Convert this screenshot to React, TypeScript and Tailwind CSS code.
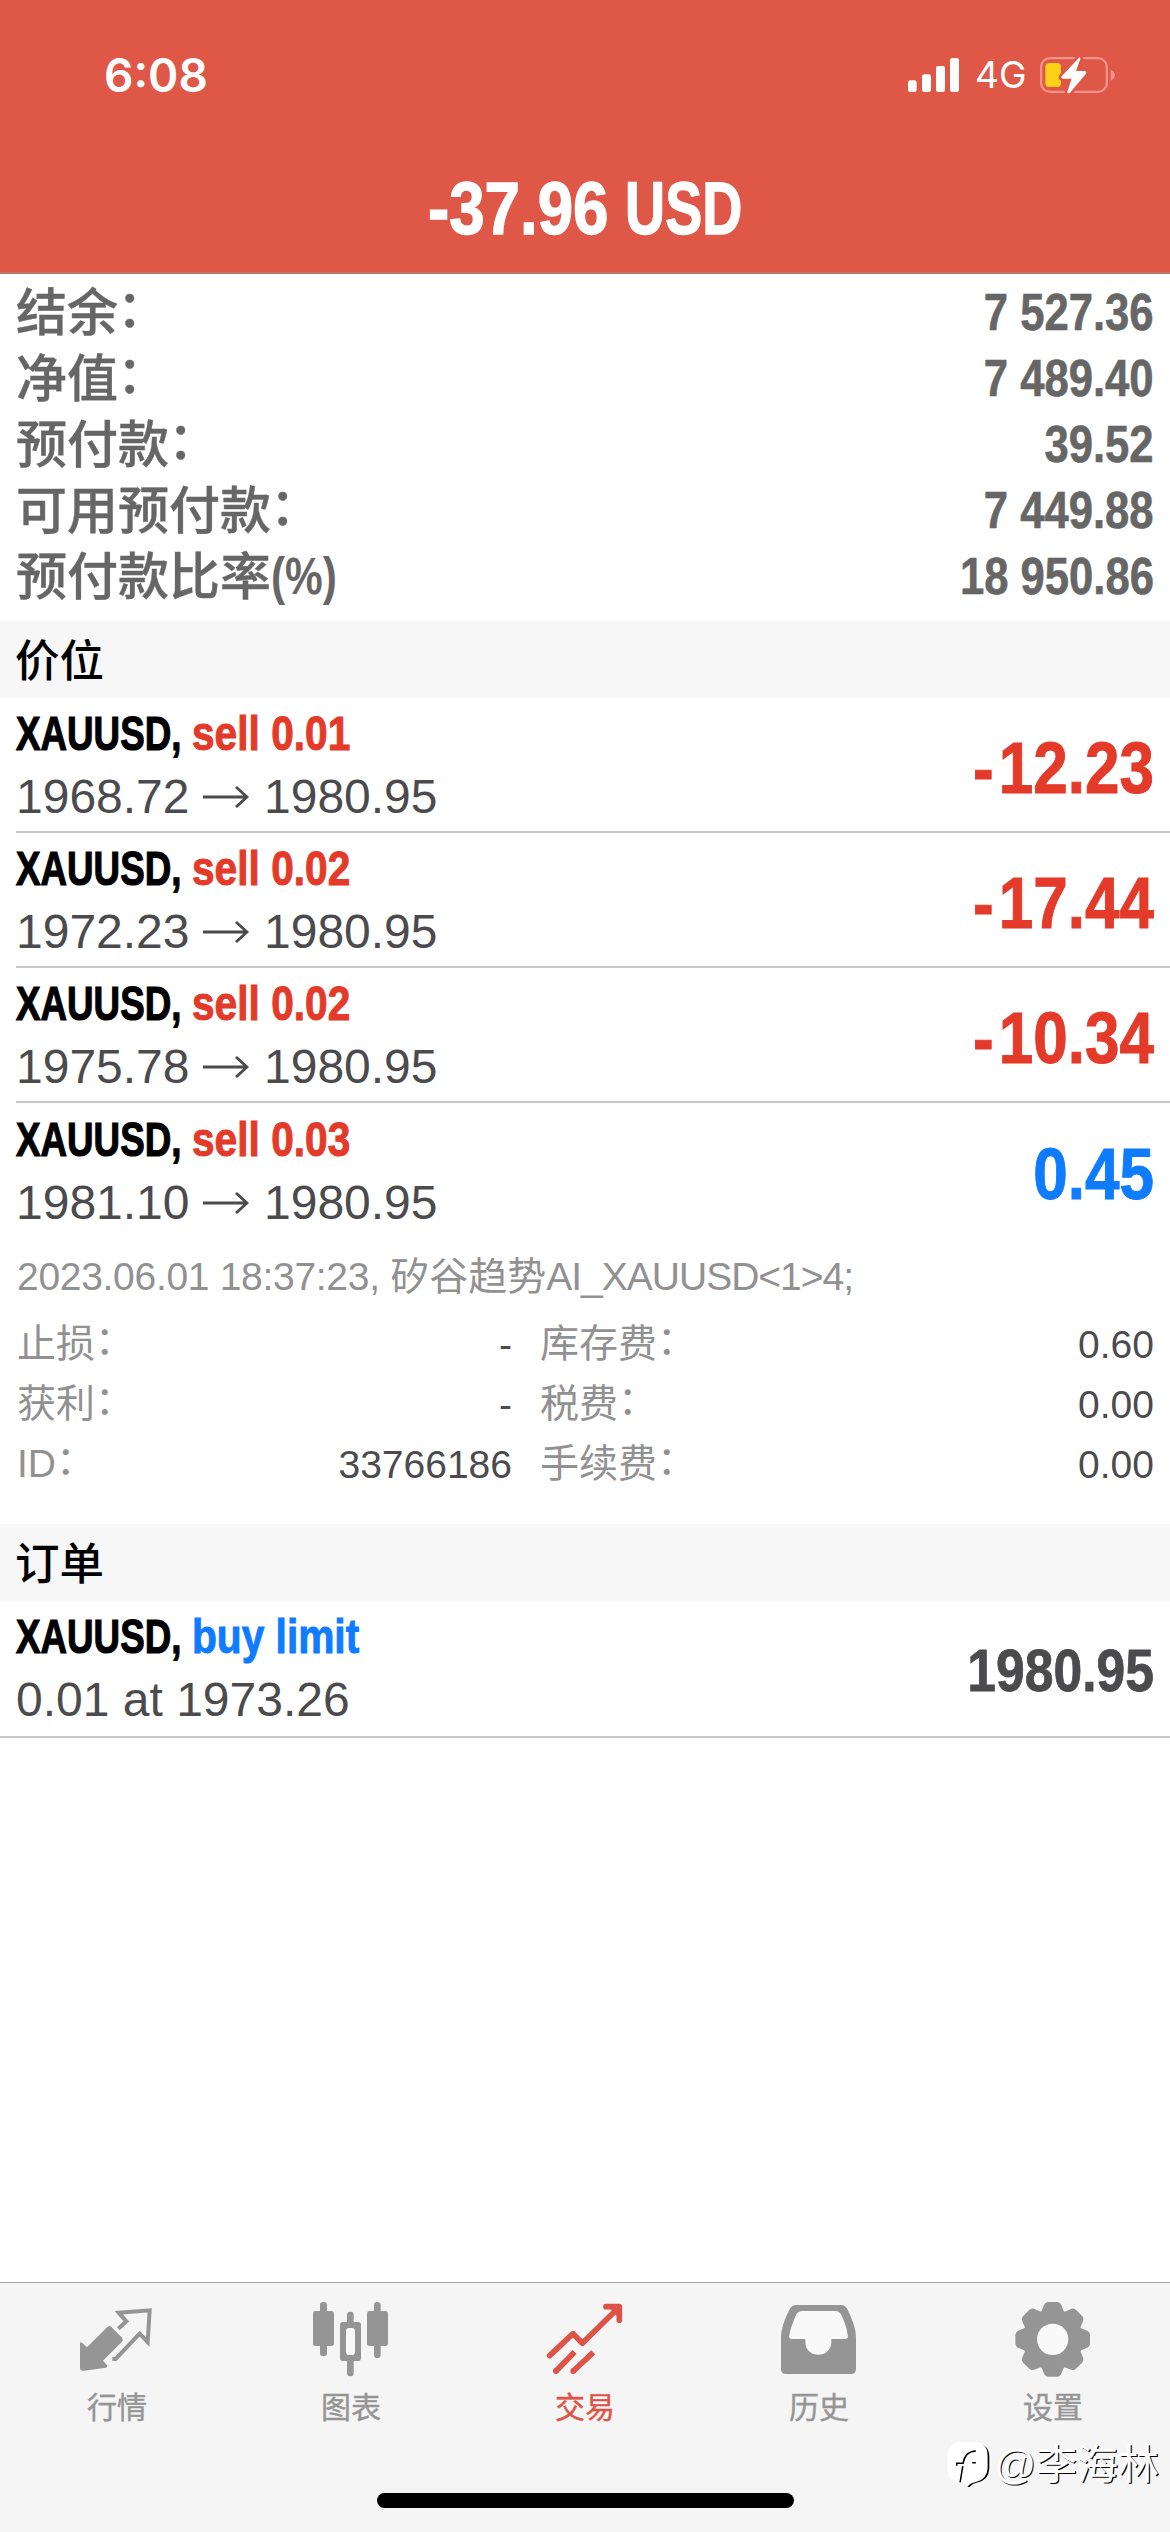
import type { ReactNode } from "react";

interface Position {
  side: string;
  open: string;
  current: string;
  profit: string;
}

const account = [
  { label: "结余", value: "7 527.36" },
  { label: "净值", value: "7 489.40" },
  { label: "预付款", value: "39.52" },
  { label: "可用预付款", value: "7 449.88" },
  { label: "预付款比率", unit: "(%)", value: "18 950.86" },
];

const positions: Position[] = [
  { side: "sell 0.01", open: "1968.72", current: "1980.95", profit: "-12.23" },
  { side: "sell 0.02", open: "1972.23", current: "1980.95", profit: "-17.44" },
  { side: "sell 0.02", open: "1975.78", current: "1980.95", profit: "-10.34" },
  { side: "sell 0.03", open: "1981.10", current: "1980.95", profit: "0.45" },
];

const details = [
  { label: "止损", value: "-", feeLabel: "库存费", fee: "0.60" },
  { label: "获利", value: "-", feeLabel: "税费", fee: "0.00" },
  { label: "ID", value: "33766186", feeLabel: "手续费", fee: "0.00" },
];

const SignalIcon = () => (
  <svg viewBox="81 78 153 108" className="h-9 w-[51px] fill-white">
    <rect x="81" y="148" width="26" height="35" rx="7" />
    <rect x="123" y="130" width="27" height="53" rx="7" />
    <rect x="165" y="105" width="27" height="78" rx="7" />
    <rect x="207" y="81" width="27" height="102" rx="7" />
  </svg>
);

const BatteryIcon = () => (
  <svg viewBox="481 75 228 114" className="h-[38px] w-[76px]">
    <rect x="484.500" y="81.500" width="197" height="101" rx="26" fill="none" stroke="#f4938b" strokeWidth="7" />
    <path d="M693 116Q706 122 706 132Q706 143 693 149Z" fill="#f4938b" />
    <rect x="497" y="96" width="47" height="72" rx="12" fill="#fdd116" />
    <path
      d="M598 80L546 136Q543 142 550 143H576L563 182Q563 190 571 185L619 128Q622 121 615 120H589L602 84Q602 77 598 80Z"
      fill="#fff"
      stroke="#de5747"
      strokeWidth="16"
      paintOrder="stroke"
    />
  </svg>
);

const ArrowIcon = () => (
  <svg viewBox="0 0 48 26" className="h-[26px] w-12" fill="none" stroke="#4b4b4e" strokeWidth="2.8">
    <path d="M1 13H45M34 3L45 13L34 23" />
  </svg>
);

const QuotesIcon = () => (
  <svg viewBox="234 114 234 234" className="size-[78px] overflow-visible">
    <path
      d="M240 248Q242 245 246 248L261 262L322 201Q328 195 334 201L366 233Q371 239 366 245L309 302L321 316Q324 321 318 323L252 332Q240 333 240 323Z"
      fill="#959595"
    />
    <path
      d="M355 206L379 184L356 158L449 151L443 246L419 221L347 297H337"
      fill="none"
      stroke="#959595"
      strokeWidth="12"
    />
  </svg>
);

const ChartIcon = () => (
  <svg viewBox="936 114 234 234" className="size-[78px] overflow-visible" fill="#959595">
    <rect x="960" y="126" width="21" height="163" rx="10" />
    <rect x="939" y="153" width="63" height="105" rx="8" />
    <rect x="1041" y="155" width="20" height="194" rx="10" />
    <rect x="1020" y="186" width="63" height="117" rx="8" />
    <rect x="1038" y="204" width="27" height="81" rx="10" fill="#f9f9f9" />
    <rect x="1122" y="126" width="20" height="168" rx="10" />
    <rect x="1101" y="153" width="63" height="105" rx="8" />
  </svg>
);

const TradeIcon = () => (
  <svg viewBox="258 114 234 234" className="size-[78px] overflow-visible" fill="none" stroke="#df5346" strokeWidth="17">
    <path d="M269 287L339 221L367 250L474 145" strokeLinecap="round" strokeLinejoin="round" />
    <path d="M438 140H478V181" strokeLinecap="round" strokeLinejoin="round" />
    <path d="M452 145H476V171Z" fill="#df5346" strokeWidth="4" />
    <path d="M288 333L344 276M340 333L400 277" />
    <circle cx="288" cy="333" r="9" fill="#df5346" stroke="none" />
    <circle cx="340" cy="333" r="9" fill="#df5346" stroke="none" />
  </svg>
);

const HistoryIcon = () => (
  <svg viewBox="960 114 234 234" className="size-[78px] overflow-visible">
    <path
      d="M1010 135H1143Q1156 135 1162 148C1176 176 1188 205 1188 235V327Q1188 342 1173 342H978Q963 342 963 327V235C963 205 975 176 989 148Q995 135 1010 135Z"
      fill="#959595"
    />
    <path
      d="M1027 153H1126Q1138 153 1144 165C1152 182 1160 202 1163 224Q1166 237 1155 237H1114V245C1114 297 1036 297 1036 245V237H996Q985 237 988 224C993 202 1000 182 1008 165Q1014 153 1027 153Z"
      fill="#f9f9f9"
    />
  </svg>
);

const SettingsIcon = () => (
  <svg viewBox="462 114 234 234" className="size-[78px] overflow-visible" fill="#959595">
    <circle cx="578" cy="238" r="89" />
    {[0, 45, 90, 135, 180, 225, 270, 315].map((angle) => (
      <path
        key={angle}
        transform={`rotate(${angle} 578 238)`}
        d="M538 162Q546 154 551 138Q555 126 566 126H590Q601 126 605 138Q610 154 618 162Z"
      />
    ))}
    <circle cx="578" cy="238" r="47" fill="#f9f9f9" />
  </svg>
);

const tabs = [
  { label: "行情", icon: <QuotesIcon /> },
  { label: "图表", icon: <ChartIcon /> },
  { label: "交易", icon: <TradeIcon />, active: true },
  { label: "历史", icon: <HistoryIcon /> },
  { label: "设置", icon: <SettingsIcon /> },
];

const SectionTitle = ({ children }: { children: ReactNode }) => (
  <h2 className="flex h-[77px] items-center bg-[#f7f7f7] pt-[4px] pl-[15px] text-[44.500px] leading-[72px] font-medium text-black">
    {children}
  </h2>
);

const OrderTitle = ({ side, buy }: { side: string; buy?: boolean }) => (
  <div className="flex h-[58px] items-center text-[49px] leading-[58px] font-bold">
    <span className="w-[176px]">
      <span className="inline-block origin-left scale-x-[0.75] text-black [-webkit-text-stroke:1.2px]">XAUUSD,</span>
    </span>
    <span
      className={`inline-block origin-left scale-x-[0.83] [-webkit-text-stroke:1px] ${buy ? "text-[#0f7bff]" : "text-[#e43a2a]"}`}
    >
      {side}
    </span>
  </div>
);

const DetailLabel = ({ children }: { children: ReactNode }) => (
  <span className="flex h-[60px] leading-[58px]">
    {children}
    <span className="h-[52px] leading-[52px]">：</span>
  </span>
);

const Profit = ({ value }: { value: string }) => {
  const negative = value.startsWith("-");

  return (
    <span
      className={`inline-block origin-right scale-x-[0.85] pt-[7px] text-[73px] leading-[80px] font-bold [-webkit-text-stroke:1px] ${negative ? "text-[#e43a2a]" : "text-[#0f7bff]"}`}
    >
      {negative && <span className="mr-1.5">-</span>}
      {value.replace("-", "")}
    </span>
  );
};

export default function App() {
  return (
    <div className="flex h-[2532px] w-[1170px] flex-col overflow-hidden bg-white whitespace-nowrap [font-family:'Liberation_Sans','Noto_Sans_CJK_SC',sans-serif]">
      <header className="h-[274px] border-b-2 border-[#c0766b] bg-[#de5747] text-white">
        <div className="flex h-[150px] items-center justify-between pr-[54px] pl-[104px] [font-family:Inter,sans-serif]">
          <span className="text-[46px] font-semibold">6:08</span>
          <div className="flex items-center">
            <SignalIcon />
            <span className="ml-4 w-[56px] text-[37px]">4G</span>
            <span className="ml-[9px]">
              <BatteryIcon />
            </span>
          </div>
        </div>
        <h1 className="flex h-[116px] items-center justify-center text-[74px] font-bold [-webkit-text-stroke:1.4px]">
          <span className="w-[182px]">
            <span className="inline-block origin-left scale-x-[0.86]">-37.96</span>
          </span>
          <span className="flex w-[132px] justify-end">
            <span className="inline-block origin-right scale-x-[0.75]">USD</span>
          </span>
        </h1>
      </header>

      <section className="h-[347px] pt-[5px]">
        {account.map((row) => (
          <div
            key={row.label}
            className="flex h-[66px] items-center justify-between px-4 text-[51px] leading-[66px] text-[#666]"
          >
            <span className="flex h-[66px] leading-[61px] font-medium [-webkit-text-stroke:0.4px] [font-family:'Noto_Sans_CJK_SC',sans-serif]">
              {row.label}
              {row.unit ? (
                <span className="inline-block origin-left scale-x-[0.83] pt-[3px] font-bold [-webkit-text-stroke:0px] [font-family:'Liberation_Sans',sans-serif]">
                  {row.unit}
                </span>
              ) : (
                <span className="-ml-px h-[53px] leading-[53px]">：</span>
              )}
            </span>
            <span className="inline-block origin-right scale-x-[0.855] pt-[2px] leading-[64px] font-bold [-webkit-text-stroke:0.6px]">
              {row.value}
            </span>
          </div>
        ))}
      </section>

      <SectionTitle>价位</SectionTitle>
      {positions.map((position, index) => (
        <div
          key={position.open}
          className={`ml-4 flex h-[135px] items-center justify-between pr-4 ${index < 3 ? "border-b-2 border-[#c8c8ca]" : ""}`}
        >
          <div className="flex flex-col pt-[2px]">
            <OrderTitle side={position.side} />
            <div className="flex h-[66px] items-center pt-[4px] text-[48px] leading-[62px] text-[#4b4b4e]">
              <span className="w-[186px]">{position.open}</span>
              <ArrowIcon />
              <span className="ml-[14px]">{position.current}</span>
            </div>
          </div>
          <Profit value={position.profit} />
        </div>
      ))}

      <section className="h-[286px] pt-px pr-4 pl-[17px] text-[39px] text-[#919191]">
        <p className="flex h-[76px] items-center">
          <span className="tracking-[-0.3px]">2023.06.01 18:37:23,&nbsp;</span>
          <span>矽谷趋势</span>
          <span className="tracking-[-1px]">AI_XAUUSD&lt;1&gt;4;</span>
        </p>
        {details.map((row) => (
          <div key={row.label} className="flex h-[60px] items-center leading-[60px]">
            <DetailLabel>{row.label}</DetailLabel>
            <span className="ml-auto text-[#4b4b4e]">{row.value}</span>
            <div className="ml-7 flex w-[614px] justify-between">
              <DetailLabel>{row.feeLabel}</DetailLabel>
              <span className="text-[#4b4b4e]">{row.fee}</span>
            </div>
          </div>
        ))}
      </section>

      <SectionTitle>订单</SectionTitle>
      <div className="flex h-[137px] items-center justify-between border-b-2 border-[#c8c8ca] px-4">
        <div className="flex flex-col">
          <OrderTitle side="buy limit" buy />
          <div className="flex h-[66px] items-center pt-[4px] text-[48px] leading-[62px] text-[#4b4b4e]">
            0.01 at 1973.26
          </div>
        </div>
        <span className="inline-block origin-right scale-x-[0.86] pt-[5px] text-[60px] font-bold text-[#4b4b4e] [-webkit-text-stroke:0.8px]">
          1980.95
        </span>
      </div>

      <nav className="relative mt-auto flex h-[250px] flex-col border-t border-[#a9a9a9] bg-[#f5f5f5]">
        <div className="flex pt-[15px]">
          {tabs.map((tab) => (
            <button key={tab.label} className="flex w-[234px] flex-col items-center">
              {tab.icon}
              <span
                className={`mt-[10px] text-[30px] leading-[44px] [-webkit-text-stroke:0.4px] ${tab.active ? "text-[#df5346]" : "text-[#959595]"}`}
              >
                {tab.label}
              </span>
            </button>
          ))}
        </div>
        <div className="mx-auto mt-auto mb-6 h-[15px] w-[417px] rounded-full bg-black" />

        {/* Author watermark */}
        <div className="absolute top-[154px] right-[11px] flex items-center text-white">
          <svg viewBox="22 33 134 146" className="h-[49px] w-[45px]">
            <path d="M110 40Q148 44 148 80V116Q146 150 112 157Q98 160 89 170H83Q88 155 104 153Z" fill="#000" />
            <path
              d="M62 36H106Q142 38 143 76V114Q141 148 108 155Q92 158 84 168L62 154Q25 152 23 116V76Q25 38 62 36Z"
              fill="#fff"
            />
            <path d="M61 156L69 108M51 107V99H70Q76 64 108 63M97 98H108" fill="none" stroke="#000" strokeWidth="4.500" />
          </svg>
          <span className="ml-0.5 text-[41px] leading-[56px] [text-shadow:1.2px_1.2px_0_#000]">@李海林</span>
        </div>
      </nav>
    </div>
  );
}
